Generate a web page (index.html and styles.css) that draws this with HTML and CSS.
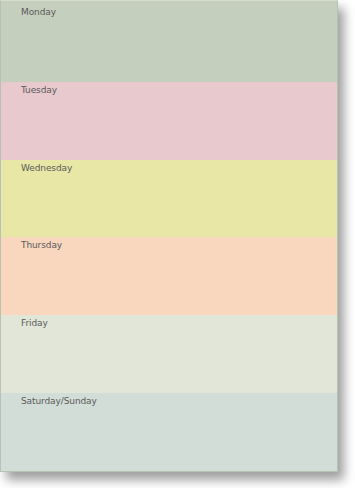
FILE: index.html
```html
<!DOCTYPE html>
<html>
<head>
<meta charset="utf-8">
<link rel="stylesheet" href="styles.css">
</head>
<body>
<div class="paper">
  <div class="band mon"><span class="label">Monday</span></div>
  <div class="band tue"><span class="label">Tuesday</span></div>
  <div class="band wed"><span class="label">Wednesday</span></div>
  <div class="band thu"><span class="label">Thursday</span></div>
  <div class="band fri"><span class="label">Friday</span></div>
  <div class="band sat"><span class="label">Saturday/Sunday</span></div>
</div>
</body>
</html>
```
FILE: styles.css
```css
html, body {
  margin: 0;
  padding: 0;
  background: #ffffff;
}
body {
  width: 355px;
  height: 488px;
  overflow: hidden;
}
.paper {
  width: 338px;
  height: 472px;
  display: flex;
  flex-direction: column;
  box-sizing: border-box;
  border: 1px solid #b7c2b4;
  border-top-color: #d4dcd0;
  box-shadow: 6px 8px 10px rgba(0, 0, 0, 0.38);
}
.band {
  flex: 1;
  padding: 3px 0 0 20px;
  box-sizing: border-box;
  font-family: "DejaVu Sans", sans-serif;
  font-size: 9px;
  line-height: 11px;
}
.mon { background: #c4cfbe; padding-top: 6px; }
.tue { background: #e8c9cd; }
.wed { background: #e8e7a5; }
.thu { background: #f9d6be; }
.fri { background: #e2e6d8; }
.sat { background: #d3ddd7; }
.label {
  color: #5a5a5a;
  letter-spacing: -0.1px;
}
```
